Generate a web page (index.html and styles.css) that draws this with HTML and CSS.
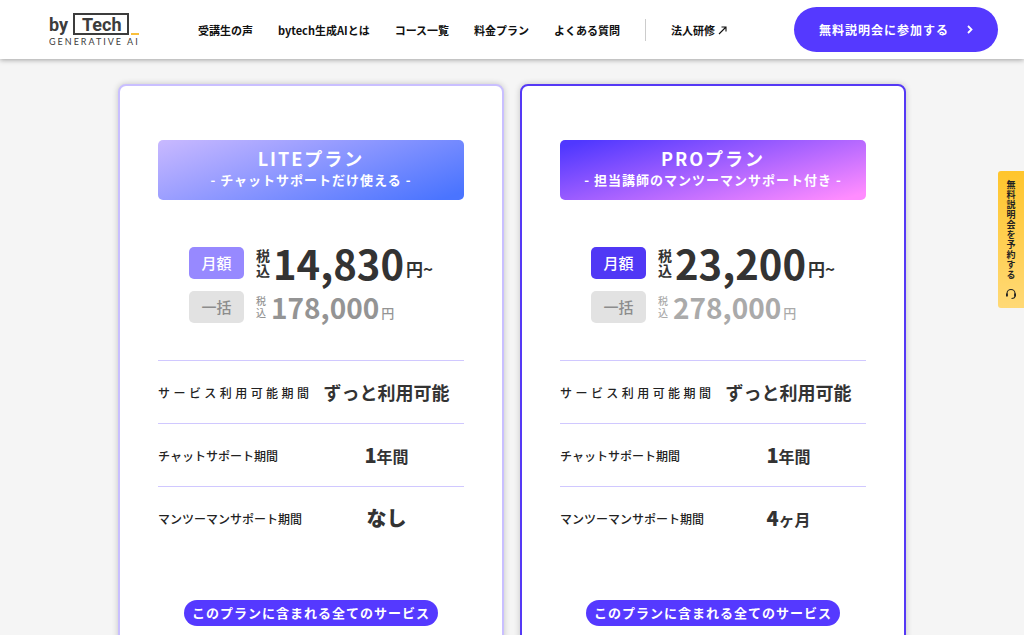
FILE: index.html
```html
<!DOCTYPE html>
<html lang="ja">
<head>
  <meta charset="UTF-8">
  <meta name="viewport" content="width=device-width, initial-scale=1.0">
  <title>料金プラン | byTech GENERATIVE AI</title>
  <link rel="stylesheet" href="styles.css">
</head>
<body>
  <header class="header">
    <a class="logo" href="#" aria-label="byTech GENERATIVE AI">
      <svg width="92" height="34" viewBox="0 0 92 34">
        <text class="logo-name" x="0" y="18">by</text>
        <rect x="25" y="1" width="54" height="20" fill="none" stroke="#3c3c3c" stroke-width="2"/>
        <text class="logo-name" x="33" y="18">Tech</text>
        <rect x="82" y="20" width="8" height="2" fill="#f9bf3b"/>
        <text class="logo-sub" x="0" y="32">GENERATIVE AI</text>
      </svg>
    </a>
    <nav class="nav">
      <a href="#">受講生の声</a>
      <a href="#">bytech生成AIとは</a>
      <a href="#">コース一覧</a>
      <a href="#">料金プラン</a>
      <a href="#">よくある質問</a>
      <a class="corporate" href="#">法人研修
        <svg width="9" height="9" viewBox="0 0 9 9"><path d="M1 8L8 1M3.5 1H8V5.5" fill="none" stroke="#111" stroke-width="1.1"/></svg>
      </a>
    </nav>
    <a class="cta" href="#">無料説明会に参加する
      <svg width="6" height="9" viewBox="0 0 6 9"><path d="M1 1L4.5 4.5L1 8" fill="none" stroke="#fff" stroke-width="1.8"/></svg>
    </a>
  </header>

  <main class="plans">
    <section class="card lite">
      <h2 class="plan-title">LITEプラン<small>- チャットサポートだけ使える -</small></h2>
      <div class="prices">
        <div class="price monthly">
          <span class="tag">月額</span>
          <span class="tax">税込</span>
          <span class="amount">14,830</span>
          <span class="yen">円~</span>
        </div>
        <div class="price total">
          <span class="tag">一括</span>
          <span class="tax">税込</span>
          <span class="amount">178,000</span>
          <span class="yen">円</span>
        </div>
      </div>
      <table class="spec">
        <tr><th class="justify" scope="row">サービス利用可能期間</th><td class="word">ずっと利用可能</td></tr>
        <tr><th scope="row">チャットサポート期間</th><td><b>1</b>年間</td></tr>
        <tr><th scope="row">マンツーマンサポート期間</th><td><b>なし</b></td></tr>
      </table>
      <h3 class="service-label">このプランに含まれる全てのサービス</h3>
    </section>

    <section class="card pro">
      <h2 class="plan-title">PROプラン<small>- 担当講師のマンツーマンサポート付き -</small></h2>
      <div class="prices">
        <div class="price monthly">
          <span class="tag">月額</span>
          <span class="tax">税込</span>
          <span class="amount">23,200</span>
          <span class="yen">円~</span>
        </div>
        <div class="price total">
          <span class="tag">一括</span>
          <span class="tax">税込</span>
          <span class="amount">278,000</span>
          <span class="yen">円</span>
        </div>
      </div>
      <table class="spec">
        <tr><th class="justify" scope="row">サービス利用可能期間</th><td class="word">ずっと利用可能</td></tr>
        <tr><th scope="row">チャットサポート期間</th><td><b>1</b>年間</td></tr>
        <tr><th scope="row">マンツーマンサポート期間</th><td><b>4</b>ヶ月</td></tr>
      </table>
      <h3 class="service-label">このプランに含まれる全てのサービス</h3>
    </section>
  </main>

  <a class="side-button" href="#">無料説明会を予約する
    <svg width="12" height="12" viewBox="0 0 12 12">
      <path d="M2 8V5.5A4 4 0 0 1 10 5.5V8Q10 10.5 6.5 10.5" fill="none" stroke="#222" stroke-width="1.1"/>
      <path d="M1 5.5H2.8V8.5H1ZM9.2 5.5H11V8.5H9.2Z" fill="#222"/>
    </svg>
  </a>
</body>
</html>
```
FILE: styles.css
```css
* {
  box-sizing: border-box;
}
body {
  margin: 0;
  background-color: #f5f5f5;
  color: #333;
  font-family: "Noto Sans CJK JP", sans-serif;
}
a {
  text-decoration: none;
}

/* header */
.header {
  position: sticky;
  top: 0;
  z-index: 10;
  display: flex;
  align-items: center;
  height: 59px;
  padding: 0 26px 0 49px;
  background-color: #fff;
  box-shadow: 0 1px 5px rgba(0, 0, 0, 0.35);
}
.logo svg {
  display: block;
}
.logo-name {
  font-family: Roboto, sans-serif;
  font-size: 18px;
  font-weight: 700;
  fill: #3c3c3c;
}
.logo-sub {
  font-family: Lato, sans-serif;
  font-size: 9px;
  letter-spacing: 2px;
  fill: #3c3c3c;
}
.nav {
  display: flex;
  align-items: center;
  gap: 25px;
  margin-left: 57px;
}
.nav a {
  color: #111;
  font-size: 11px;
  font-weight: 700;
  line-height: 22px;
  white-space: nowrap;
}
.nav .corporate {
  padding-left: 25px;
  border-left: 1px solid #ccc;
}
.cta {
  display: flex;
  align-items: center;
  justify-content: center;
  gap: 18px;
  width: 204px;
  height: 45px;
  margin-left: auto;
  border-radius: 23px;
  background-color: #5539ff;
  color: #fff;
  font-size: 12px;
  font-weight: 700;
  letter-spacing: 1px;
  white-space: nowrap;
}

/* plans */
.plans {
  display: grid;
  grid-template-columns: 1fr 1fr;
  gap: 16px;
  max-width: 788px;
  margin: 25px auto 0;
}
.card {
  padding: 54px 38px 60px;
  border: 2px solid #c9bfff;
  border-radius: 8px;
  background-color: #fff;
  box-shadow: 0 0 6px rgba(0, 0, 0, 0.2);
}
.card.pro {
  border-color: #5539f5;
}
.plan-title {
  height: 60px;
  margin: 0;
  padding-top: 6px;
  border-radius: 5px;
  background: linear-gradient(160deg, #c9b9ff 0%, #9c9fff 35%, #4a74ff 95%);
  color: #fff;
  font-size: 18px;
  font-weight: 700;
  letter-spacing: 2px;
  line-height: 24px;
  text-align: center;
}
.pro .plan-title {
  background: linear-gradient(165deg, #5038ff 5%, #ff8cff 95%);
}
.plan-title small {
  display: block;
  font-size: 13px;
  letter-spacing: 1px;
  line-height: 20px;
}

.prices {
  display: grid;
  gap: 12px;
  padding: 47px 0 0 31px;
}
.price {
  display: flex;
  align-items: center;
  height: 32px;
}
.tag {
  width: 55px;
  margin-right: 12px;
  border-radius: 5px;
  background-color: #9789ff;
  color: #fff;
  font-size: 15px;
  font-weight: 500;
  line-height: 32px;
  text-align: center;
}
.pro .tag {
  background-color: #5038f5;
}
.total .tag {
  background-color: #e2e2e2;
  color: #8c8c8c;
}
.tax {
  width: 14px;
  margin-right: 3px;
  font-size: 14px;
  font-weight: 700;
  line-height: 15px;
}
.amount {
  font-size: 40px;
  font-weight: 700;
  line-height: 32px;
}
.yen {
  align-self: flex-end;
  margin-left: 2px;
  font-size: 17px;
  font-weight: 700;
  line-height: 20px;
}
.total {
  color: #949494;
}
.pro .total {
  color: #aaa;
}
.total .tax {
  width: 10px;
  margin-right: 5px;
  font-size: 10px;
  font-weight: 500;
  line-height: 12px;
}
.total .amount {
  font-size: 28px;
}
.total .yen {
  font-size: 13px;
  font-weight: 500;
}

.spec {
  width: 100%;
  margin-top: 37px;
  border-collapse: collapse;
  table-layout: fixed;
}
.spec th,
.spec td {
  height: 63px;
  padding: 0;
  border-top: 1px solid #d0c8ff;
}
.spec th {
  width: 151px;
  color: #222;
  font-size: 12px;
  font-weight: 500;
  text-align: left;
  white-space: nowrap;
}
.spec .justify {
  white-space: normal;
  text-align-last: justify;
  text-justify: inter-character;
}
.spec td {
  font-size: 16px;
  font-weight: 700;
  line-height: 28px;
  text-align: center;
}
.spec b {
  font-size: 20px;
}
.spec .word {
  font-size: 18px;
}
.service-label {
  width: 254px;
  margin: 50px auto 0;
  border-radius: 13px;
  background-color: #5539ff;
  color: #fff;
  font-size: 13px;
  font-weight: 700;
  letter-spacing: 1px;
  line-height: 26px;
  text-align: center;
  white-space: nowrap;
}

/* reservation button on the right edge */
.side-button {
  position: fixed;
  top: 171px;
  right: 0;
  z-index: 5;
  display: flex;
  align-items: center;
  gap: 8px;
  width: 26px;
  height: 137px;
  padding-top: 9px;
  border-radius: 3px 0 0 3px;
  background: linear-gradient(#ffc52c, #ffd976);
  color: #222;
  font-size: 9px;
  font-weight: 700;
  letter-spacing: 1px;
  writing-mode: vertical-rl;
}
```
